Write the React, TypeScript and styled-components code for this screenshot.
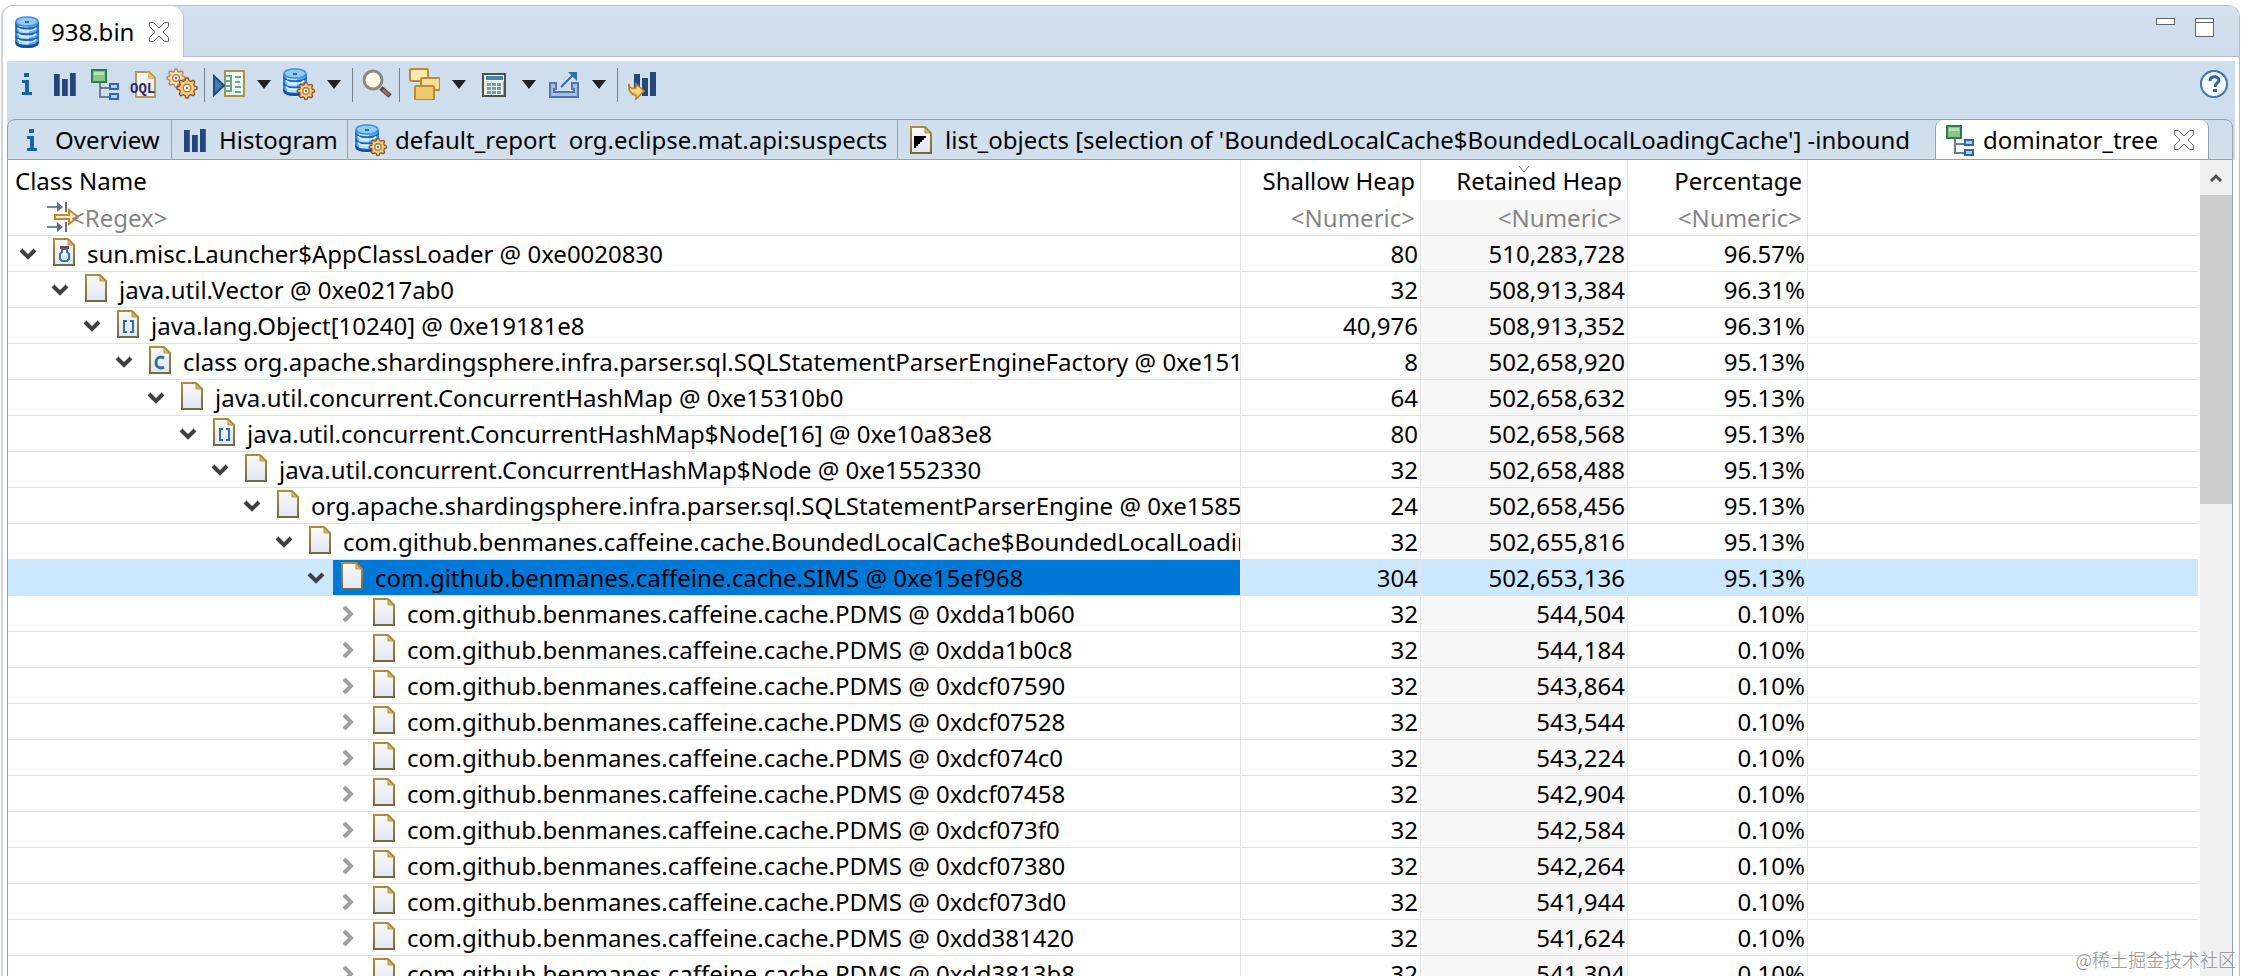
import React from "react";
import styled, { createGlobalStyle } from "styled-components";

const GlobalStyle = createGlobalStyle`
  *, *::before, *::after { box-sizing: border-box; }
  body {
    margin: 0;
    background: #ffffff;
    color: #000000;
    font: 24px/36px "Noto Sans", "Noto Sans CJK SC", sans-serif;
  }
  button, input { font: inherit; color: inherit; }
`;

/* ---------- frame ---------- */

const Page = styled.div`
  position: relative;
  display: flex;
  height: 100vh;
  padding: 5px 2px 0 1px;
  overflow: hidden;
`;

const Editor = styled.div`
  display: flex;
  flex: 1;
  flex-direction: column;
  min-width: 0;
  border: 1px solid #b4bfce;
  border-left: 2px solid #ccd3db;
  border-bottom: 0;
  border-radius: 12px 12px 0 0;
  overflow: hidden;
`;

const EditorStrip = styled.div`
  display: flex;
  align-items: flex-start;
  height: 51px;
  flex: none;
  background: linear-gradient(#d4e1ef, #cddceb);
  border-bottom: 1px solid #aebbd0;
`;

const EditorTab = styled.div`
  display: flex;
  align-items: center;
  gap: 8px;
  width: 181px;
  height: 51px;
  padding: 0 14px 0 8px;
  background: #ffffff;
  border-right: 1px solid #b4bfce;
  border-radius: 0 12px 0 0;
`;

const TabTitle = styled.button`
  display: flex;
  align-items: center;
  gap: 8px;
  flex: 1;
  min-width: 0;
  padding: 0;
  border: 0;
  background: none;
  text-align: left;
  white-space: pre;
`;

const PlainButton = styled.button`
  display: flex;
  flex: none;
  padding: 0;
  border: 0;
  background: none;
`;

const WindowButtons = styled.div`
  display: flex;
  gap: 20px;
  margin-left: auto;
  padding: 12px 25px 0 0;
`;

const EditorBody = styled.div`
  display: flex;
  flex: 1;
  flex-direction: column;
  min-height: 0;
  padding: 4px 4px 0;
`;

/* ---------- toolbar ---------- */

const Toolbar = styled.div`
  display: flex;
  align-items: flex-start;
  flex: none;
  height: 58px;
  padding: 7px 5px 0 3px;
  background: #cfdeec;
`;

const ToolButton = styled.button`
  width: 39px;
  height: 32px;
  flex: none;
  padding: 0;
  border: 0;
  background: none;
  text-align: left;
  svg { display: block; }
`;

const DropButton = styled(ToolButton)`
  display: flex;
  align-items: center;
  gap: 12px;
  width: 70px;
`;

const Separator = styled.span`
  width: 1px;
  height: 34px;
  flex: none;
  margin: 0 8px 0 -1px;
  background: #75818f;
`;

const Spacer = styled.span`
  flex: 1;
`;

/* ---------- inner tabs ---------- */

const StripBack = styled.div`
  flex: none;
  background: #cfdeec;
`;

const TabStrip = styled.div`
  display: grid;
  grid-template-columns: 164px 176px 550px 1037px 274px 1fr;
  height: 41px;
  margin-right: 2px;
  border: 1px solid #93a1b1;
  border-radius: 8px 8px 0 0;
  background: linear-gradient(#cfdeec, #d2e0ee);
  overflow: hidden;
`;

const InnerTab = styled.div<{ $active?: boolean; $divided?: boolean }>`
  display: flex;
  align-items: center;
  min-width: 0;
  height: ${(p) => (p.$active ? 40 : 39)}px;
  padding: 0 14px 0 7px;
  background: ${(p) => (p.$active ? "#ffffff" : "transparent")};
  border: 0 solid #93a1b1;
  border-width: 0 ${(p) => (p.$active || p.$divided ? 1 : 0)}px 0 ${(p) => (p.$active ? 1 : 0)}px;
  border-radius: ${(p) => (p.$active ? "8px 8px 0 0" : "0")};
`;

const InnerTitle = styled(TabTitle)`
  flex: 1 0 auto;
`;

/* ---------- table ---------- */

const Content = styled.div`
  display: flex;
  flex: 1;
  min-height: 0;
  margin-right: 2px;
  border: 1px solid #93a1b1;
  border-width: 0 1px;
  overflow: hidden;
`;

const TableArea = styled.div`
  flex: 1;
  min-width: 0;
  margin-right: 2px;
  overflow: hidden;
`;

const Table = styled.table`
  width: 100%;
  table-layout: fixed;
  border-collapse: separate;
  border-spacing: 0;
`;

const Col = styled.col<{ $w?: number }>`
  width: ${(p) => (p.$w ? `${p.$w}px` : "auto")};
`;

const HeadCell = styled.th<{ $left?: boolean }>`
  position: relative;
  height: 40px;
  padding: ${(p) => (p.$left ? "2px 0 0 7px" : "2px 5px 0 0")};
  border-right: 1px solid #e6e6e6;
  font-weight: 400;
  text-align: ${(p) => (p.$left ? "left" : "right")};
  white-space: nowrap;
  &:last-child { border-right: 0; }
`;

const SortMark = styled.svg`
  position: absolute;
  top: 5px;
  left: 50%;
  margin-left: -6px;
`;

const FilterCell = styled.td<{ $sorted?: boolean }>`
  height: 36px;
  padding: 0 5px 0 0;
  background: ${(p) => (p.$sorted ? "#f7f7f7" : "#ffffff")};
  border-right: 1px solid #e6e6e6;
  border-bottom: 1px solid #e0e0e0;
  &:last-child { border-right: 0; }
`;

const FilterBox = styled.div`
  display: flex;
  padding-left: 39px;
  svg { flex: none; }
`;

const FilterInput = styled.input<{ $right?: boolean }>`
  display: block;
  width: 100%;
  height: 35px;
  margin-left: ${(p) => (p.$right ? 0 : -8)}px;
  padding: 0;
  border: 0;
  outline: 0;
  background: transparent;
  text-align: ${(p) => (p.$right ? "right" : "left")};
  &::placeholder { color: #868686; opacity: 1; }
`;

const Row = styled.tr<{ $selected?: boolean }>`
  background: ${(p) => (p.$selected ? "#cce8ff" : "transparent")};
`;

const Cell = styled.td<{ $sorted?: boolean }>`
  height: 36px;
  padding: 0 2px 0 0;
  background: ${(p) => (p.$sorted ? "#f7f7f7" : "transparent")};
  border-right: 1px solid #e6e6e6;
  border-bottom: 1px solid #e0e0e0;
  line-height: 35px;
  text-align: right;
  &:last-child { border-right: 0; }
`;

const TreeCell = styled(Cell)`
  padding: 0;
  text-align: left;
`;

const TreeLine = styled.div<{ $depth: number }>`
  display: flex;
  height: 35px;
  padding-left: ${(p) => 10 + p.$depth * 32}px;
  overflow: hidden;
`;

const Toggle = styled.button`
  display: flex;
  align-items: center;
  justify-content: center;
  width: 20px;
  flex: none;
  margin-right: 7px;
  padding: 0;
  border: 0;
  background: none;
`;

const Label = styled.div<{ $selected?: boolean }>`
  display: flex;
  flex: 1;
  gap: 7px;
  min-width: 0;
  padding-left: 3px;
  background: ${(p) => (p.$selected ? "#0078d7" : "transparent")};
  white-space: nowrap;
  overflow: hidden;
  svg { flex: none; }
`;

/* ---------- scroll bar ---------- */

const ScrollBar = styled.div`
  display: flex;
  flex-direction: column;
  width: 32px;
  flex: none;
  background: #f0f0f0;
`;

const ScrollUp = styled.button`
  display: flex;
  align-items: center;
  justify-content: center;
  height: 35px;
  flex: none;
  padding: 0;
  border: 0;
  background: #f0f0f0;
`;

const Thumb = styled.div`
  height: 309px;
  background: #cdcdcd;
`;

const Watermark = styled.div`
  position: absolute;
  right: 6px;
  bottom: 5px;
  color: #8f8f8f;
  font: 300 18px/24px "Noto Sans CJK SC", sans-serif;
`;

/* ---------- icons ---------- */

const Svg = ({ children, w = 32, h = 32 }: { children: React.ReactNode; w?: number; h?: number }) => (
  <svg width={w} height={h} viewBox={`0 0 ${w} ${h}`} fill="none" aria-hidden="true">
    {children}
  </svg>
);

const gearPath = (cx: number, cy: number, r: number) => {
  const pts: string[] = [];
  for (let i = 0; i < 32; i++) {
    const a = ((i - 0.5) / 32) * Math.PI * 2;
    const rad = i % 4 < 2 ? r : r * 0.76;
    pts.push(`${(cx + Math.cos(a) * rad).toFixed(1)} ${(cy + Math.sin(a) * rad).toFixed(1)}`);
  }
  return `M${pts.join("L")}Z`;
};

const Gear = ({ cx, cy, r, pale }: { cx: number; cy: number; r: number; pale?: boolean }) => (
  <>
    <path
      d={gearPath(cx, cy, r)}
      fill={pale ? "#f8e2b0" : "#f7cf7c"}
      stroke={pale ? "#b08468" : "#8c5236"}
      strokeWidth="1.4"
      strokeLinejoin="round"
    />
    <circle cx={cx} cy={cy} r={r * 0.38} fill="#f4f1e6" stroke="#b57a35" strokeWidth="1.4" />
    <circle cx={cx} cy={cy} r="1.2" fill="#4a6fa5" />
  </>
);

const Cylinder = ({ w, h, layers }: { w: number; h: number; layers: number }) => {
  const step = (h - 9) / layers;
  return (
    <>
      <path
        d={`M1 5V${h - 5}C1 ${h - 2} 6 ${h} ${w / 2} ${h}S${w - 1} ${h - 2} ${w - 1} ${h - 5}V5Z`}
        fill="#64acee"
      />
      <rect x="4" y="6" width={w / 2 - 2} height={h - 9} fill="#b9e3fb" />
      <path d={`M1 6V${h - 5}M${w - 1} 6V${h - 5}`} stroke="#2f7fd2" strokeWidth="2" />
      {Array.from({ length: layers }, (_, i) => {
        const y = 5 + step * (i + 1);
        return (
          <g key={i}>
            <path d={`M1 ${y - 2}C2 ${y + 3} ${w - 2} ${y + 3} ${w - 1} ${y - 2}`} stroke="#1d5fc0" strokeWidth="1.8" />
            <path d={`M3 ${y + 1}C5 ${y + 5} ${w - 5} ${y + 5} ${w - 3} ${y + 1}`} stroke="#d2f0ff" strokeWidth="1.6" />
          </g>
        );
      })}
      <path d={`M1 ${h - 6}C1 ${h - 2} 6 ${h - 1} ${w / 2} ${h - 1}S${w - 1} ${h - 2} ${w - 1} ${h - 6}`} stroke="#1747a4" strokeWidth="2" />
      <ellipse cx={w / 2} cy="5.5" rx={w / 2 - 1} ry="4.5" fill="#8fcaf0" stroke="#4293da" strokeWidth="1.6" />
      <path d={`M${w / 2 - 2} 6h4`} stroke="#2b6cae" strokeWidth="2" />
    </>
  );
};

const DatabaseIcon = () => (
  <Svg>
    <g transform="translate(4 0)">
      <Cylinder w={24} h={32} layers={4} />
    </g>
  </Svg>
);

const DatabaseGearIcon = () => (
  <Svg>
    <Cylinder w={24} h={28} layers={3} />
    <Gear cx={23} cy={23} r={8.6} />
  </Svg>
);

const InfoIcon = () => (
  <Svg>
    <path d="M14 5h5v4h-5zM12 12h7v12h3v3H12v-3h3v-9h-3z" fill="#1565a5" />
  </Svg>
);

const HistogramIcon = () => (
  <Svg>
    <path d="M5 6h6v22H5zM13 11h6v17h-6zM21 5h6v23h-6z" fill="#26457b" />
    <path d="M10 6h1v22h-1zM18 11h1v17h-1zM26 5h1v23h-1z" fill="#4a6796" />
  </Svg>
);

const TreeIcon = () => (
  <Svg>
    <g shapeRendering="crispEdges">
      <path d="M12 15v14h9M12 20h9" stroke="#6f7f92" strokeWidth="2" />
      <rect x="4" y="2" width="14" height="12" fill="#8cc48a" stroke="#2c7d4f" strokeWidth="2" />
      <path d="M6 4h10v3H6z" fill="#b9deb2" />
      <rect x="22" y="16" width="8" height="5" fill="#a9d4f5" stroke="#2f62b0" strokeWidth="2" />
      <rect x="22" y="26" width="8" height="5" fill="#a9d4f5" stroke="#2f62b0" strokeWidth="2" />
    </g>
  </Svg>
);

const Sheet = ({ children }: { children?: React.ReactNode }) => (
  <Svg>
    <defs>
      <linearGradient id="sheetEdge" x1="0" y1="0" x2="0" y2="1">
        <stop offset="0" stopColor="#b08d3e" />
        <stop offset="1" stopColor="#746c3e" />
      </linearGradient>
      <linearGradient id="sheetFill" x1="0" y1="0" x2="0" y2="1">
        <stop offset="0" stopColor="#fbfbfd" />
        <stop offset="1" stopColor="#e0e6f4" />
      </linearGradient>
    </defs>
    <path d="M6 3h14l6 6v20H6z" fill="url(#sheetFill)" stroke="url(#sheetEdge)" strokeWidth="2" />
    <path d="M20 4v5h5z" fill="#dcbb6d" stroke="#b8934a" strokeWidth="1" />
    {children}
  </Svg>
);

const FileIcon = () => <Sheet />;

const ArrayIcon = () => (
  <Sheet>
    <path d="M15 13h-3v11h3M18 13h3v11h-3" stroke="#2f6fa8" strokeWidth="2" />
  </Sheet>
);

const ClassIcon = () => (
  <Sheet>
    <path d="M20 14c-3-2-8-1-8 4.500s5 6.500 8 4.500" stroke="#2f6fa8" strokeWidth="2.800" />
  </Sheet>
);

const LoaderIcon = () => (
  <Sheet>
    <rect x="12" y="10" width="9" height="3" fill="#8a3f22" />
    <path d="M14 13v3l-2 2v5l2 2h5l2-2v-5l-2-2v-3z" fill="#f4fafd" stroke="#2f74b0" strokeWidth="2" />
    <path d="M14 20h5v3h-5z" fill="#cfe6f6" />
  </Sheet>
);

const ListObjectsIcon = () => (
  <Sheet>
    <path d="M9 12h12v2h-2v2h-2v2h-2v2h-2v2h-2v2H9z" fill="#000" />
  </Sheet>
);

const OqlIcon = () => (
  <Svg>
    <path d="M9 4h13l6 6v19H9z" fill="#f1f3f8" stroke="#b39a5e" strokeWidth="2" />
    <path d="M21 4v7h7z" fill="#e8c06a" />
    <text x="3" y="25" fill="#2b2a6e" fontFamily="Liberation Mono, monospace" fontWeight="700" fontSize="14">
      OQL
    </text>
  </Svg>
);

const GearsIcon = () => (
  <Svg>
    <Gear cx={10} cy={10} r={9} pale />
    <Gear cx={21} cy={20} r={10} />
  </Svg>
);

const RunReportIcon = () => (
  <Svg>
    <rect x="12" y="3" width="19" height="25" fill="#f3faf3" stroke="#a8914a" strokeWidth="2" />
    <path d="M11 8h7M11 13h7M11 18h7M11 23h7M18 7v17M22 9h6M22 14h5M22 19h6M22 24h6" stroke="#62aa8a" strokeWidth="2" />
    <path d="M1 8l10 9.500L1 27z" fill="#3d7fae" stroke="#1c4f80" strokeWidth="2" />
  </Svg>
);

const SearchIcon = () => (
  <Svg>
    <path d="M20 20l9 8" stroke="#5d4a48" strokeWidth="5" />
    <path d="M22 22l6 5" stroke="#b9765a" strokeWidth="2" />
    <circle cx="12" cy="12" r="9" fill="#fdf8dd" stroke="#8a8a84" strokeWidth="3" />
    <path d="M7 11c0-3 2-4 5-4" stroke="#ffffff" strokeWidth="2" />
  </Svg>
);

const GroupIcon = () => (
  <Svg>
    <g stroke="#bd8b35" strokeWidth="2" strokeLinejoin="round">
      <path d="M2 3q0-2 2-2h15q1 0 1 2v9q0 1-1 1H4q-2 0-2-2z" fill="#fae8b2" />
      <path d="M13 11q0-1 1-1h17q1 0 1 1v9q0 2-2 2H15q-2 0-2-2z" fill="#f6dd98" />
      <path d="M7 19q0-1 1-1h17q1 0 1 1v11q0 2-1 2H9q-2 0-2-2z" fill="#efc96d" />
    </g>
  </Svg>
);

const CalculatorIcon = () => (
  <Svg>
    <g shapeRendering="crispEdges">
      <rect x="5" y="6" width="22" height="22" fill="#f3f1df" stroke="#4c4f4b" strokeWidth="2" />
      <rect x="8" y="8" width="17" height="4" fill="#3f87b5" />
      {[15, 19, 23].map((y) =>
        [9, 14, 19].map((x) => <rect key={`${x}-${y}`} x={x} y={y} width="4" height="3" fill="#6a9fc0" />)
      )}
      <path d="M25 13v14" stroke="#b5a76c" strokeWidth="1" />
    </g>
  </Svg>
);

const ExportIcon = () => (
  <Svg>
    <path d="M2 15h6v6h-2v3h20v-3h-2v-6h6v14H2z" fill="#a9bfe2" stroke="#5373ae" strokeWidth="2" />
    <path d="M13 19L26 6" stroke="#2d6f9f" strokeWidth="2" />
    <path d="M20 4h9v9z" fill="#2d6f9f" />
  </Svg>
);

const CompareIcon = () => (
  <Svg>
    <path d="M8 6h6v14H8zM16 10h6v18h-6zM24 4h6v24h-6z" fill="#26457b" />
    <path d="M3 16c0 4 3 5 7 4v-4l8 7-8 8v-4C5 27 2 22 3 16z" fill="#f8d77f" stroke="#b9822a" strokeWidth="1.600" />
  </Svg>
);

const HelpIcon = () => (
  <Svg>
    <circle cx="16" cy="16" r="13" fill="#f7fbfe" stroke="#3b78b4" strokeWidth="2" />
    <path d="M12 13c0-6 9-5 9-1 0 3-4 3-4 7" stroke="#2a67a8" strokeWidth="3" />
    <path d="M15 21h4v3h-4z" fill="#2a67a8" />
  </Svg>
);

const FilterIcon = () => (
  <Svg>
    <path d="M0 7h11M0 27h11" stroke="#5b8db3" strokeWidth="2" />
    <path d="M10 2l6 5-6 5zM10 22l6 5-6 5z" fill="#66707c" />
    <path d="M19 2v10M19 22v10" stroke="#66707c" strokeWidth="2" />
    <path d="M8 15h14v-5l9 7-9 7v-5H8z" fill="#fdf3cf" stroke="#c08a2c" strokeWidth="2" />
  </Svg>
);

const CloseIcon = () => (
  <Svg w={20} h={20}>
    <path
      d="M0.500 0.500h4l5.500 5.500 5.500-5.500h4v4L14 10l5.500 5.500v4h-4L10 14l-5.500 5.500h-4v-4L6 10 0.500 4.500z"
      fill="#ffffff"
      stroke="#6a6a6a"
      strokeWidth="1"
    />
  </Svg>
);

const DropArrow = () => (
  <Svg w={14} h={9}>
    <path d="M0 0h14L7 9z" fill="#1f2328" />
  </Svg>
);

const MinimizeIcon = () => (
  <Svg w={19} h={20}>
    <rect x="0.5" y="0.5" width="18" height="6" fill="#fff" stroke="#5f6670" />
  </Svg>
);

const MaximizeIcon = () => (
  <Svg w={19} h={20}>
    <path d="M0.5 0.500h18v18h-18zM0.500 4.500h18" fill="#fff" stroke="#5f6670" />
  </Svg>
);

const Chevron = ({ open }: { open: boolean }) =>
  open ? (
    <Svg w={18} h={12}>
      <path d="M2 2l7 7 7-7" stroke="#404040" strokeWidth="4" />
    </Svg>
  ) : (
    <Svg w={12} h={18}>
      <path d="M2 2l7 7-7 7" stroke="#a0a0a0" strokeWidth="4" />
    </Svg>
  );

/* ---------- data ---------- */

type Item = { name: string; icon?: React.FC; shallow: string; retained: string; pct: string; selected?: boolean };

const path: Item[] = [
  { name: "sun.misc.Launcher$AppClassLoader @ 0xe0020830", icon: LoaderIcon, shallow: "80", retained: "510,283,728", pct: "96.57%" },
  { name: "java.util.Vector @ 0xe0217ab0", shallow: "32", retained: "508,913,384", pct: "96.31%" },
  { name: "java.lang.Object[10240] @ 0xe19181e8", icon: ArrayIcon, shallow: "40,976", retained: "508,913,352", pct: "96.31%" },
  { name: "class org.apache.shardingsphere.infra.parser.sql.SQLStatementParserEngineFactory @ 0xe1517e48", icon: ClassIcon, shallow: "8", retained: "502,658,920", pct: "95.13%" },
  { name: "java.util.concurrent.ConcurrentHashMap @ 0xe15310b0", shallow: "64", retained: "502,658,632", pct: "95.13%" },
  { name: "java.util.concurrent.ConcurrentHashMap$Node[16] @ 0xe10a83e8", icon: ArrayIcon, shallow: "80", retained: "502,658,568", pct: "95.13%" },
  { name: "java.util.concurrent.ConcurrentHashMap$Node @ 0xe1552330", shallow: "32", retained: "502,658,488", pct: "95.13%" },
  { name: "org.apache.shardingsphere.infra.parser.sql.SQLStatementParserEngine @ 0xe1585c10", shallow: "24", retained: "502,658,456", pct: "95.13%" },
  { name: "com.github.benmanes.caffeine.cache.BoundedLocalCache$BoundedLocalLoadingCache", shallow: "32", retained: "502,655,816", pct: "95.13%" },
  { name: "com.github.benmanes.caffeine.cache.SIMS @ 0xe15ef968", shallow: "304", retained: "502,653,136", pct: "95.13%", selected: true },
];

const leaves: [string, string][] = [
  ["0xdda1b060", "544,504"],
  ["0xdda1b0c8", "544,184"],
  ["0xdcf07590", "543,864"],
  ["0xdcf07528", "543,544"],
  ["0xdcf074c0", "543,224"],
  ["0xdcf07458", "542,904"],
  ["0xdcf073f0", "542,584"],
  ["0xdcf07380", "542,264"],
  ["0xdcf073d0", "541,944"],
  ["0xdd381420", "541,624"],
  ["0xdd3813b8", "541,304"],
];

const rows = [
  ...path.map((item, depth) => ({ ...item, depth, open: true })),
  ...leaves.map(([address, retained]) => ({
    name: `com.github.benmanes.caffeine.cache.PDMS @ ${address}`,
    icon: undefined,
    shallow: "32",
    retained,
    pct: "0.10%",
    selected: false,
    depth: path.length,
    open: false,
  })),
];

const tabs: { title: string; icon: React.FC; active?: boolean; divided?: boolean }[] = [
  { title: "Overview", icon: InfoIcon, divided: true },
  { title: "Histogram", icon: HistogramIcon, divided: true },
  { title: "default_report  org.eclipse.mat.api:suspects", icon: DatabaseGearIcon, divided: true },
  { title: "list_objects [selection of 'BoundedLocalCache$BoundedLocalLoadingCache'] -inbound", icon: ListObjectsIcon },
  { title: "dominator_tree", icon: TreeIcon, active: true },
];

const Tool = ({ icon: Icon, label, drop }: { icon: React.FC; label: string; drop?: boolean }) =>
  drop ? (
    <DropButton aria-label={label} aria-haspopup="menu">
      <Icon />
      <DropArrow />
    </DropButton>
  ) : (
    <ToolButton aria-label={label}>
      <Icon />
    </ToolButton>
  );

export default function App() {
  return (
    <Page>
      <GlobalStyle />
      <Editor>
        <EditorStrip>
          <EditorTab>
            <TabTitle>
              <DatabaseIcon />
              938.bin
            </TabTitle>
            <PlainButton aria-label="Close 938.bin">
              <CloseIcon />
            </PlainButton>
          </EditorTab>
          <WindowButtons>
            <PlainButton aria-label="Minimize">
              <MinimizeIcon />
            </PlainButton>
            <PlainButton aria-label="Maximize">
              <MaximizeIcon />
            </PlainButton>
          </WindowButtons>
        </EditorStrip>
        <EditorBody>
          <Toolbar role="toolbar">
            <Tool icon={InfoIcon} label="Overview" />
            <Tool icon={HistogramIcon} label="Histogram" />
            <Tool icon={TreeIcon} label="Dominator tree" />
            <Tool icon={OqlIcon} label="OQL" />
            <Tool icon={GearsIcon} label="Thread overview" />
            <Separator />
            <Tool icon={RunReportIcon} label="Run report" drop />
            <Tool icon={DatabaseGearIcon} label="Query browser" drop />
            <Separator />
            <Tool icon={SearchIcon} label="Find object" />
            <Separator />
            <Tool icon={GroupIcon} label="Group result" drop />
            <Tool icon={CalculatorIcon} label="Calculate retained size" drop />
            <Tool icon={ExportIcon} label="Export" drop />
            <Separator />
            <Tool icon={CompareIcon} label="Compare" />
            <Spacer />
            <PlainButton aria-label="Help">
              <HelpIcon />
            </PlainButton>
          </Toolbar>
          <StripBack>
            <TabStrip role="tablist">
              {tabs.map(({ title, icon: Icon, active, divided }) => (
                <InnerTab key={title} $active={active} $divided={divided}>
                  <InnerTitle role="tab" aria-selected={!!active}>
                    <Icon />
                    {title}
                  </InnerTitle>
                  {active && (
                    <PlainButton aria-label={`Close ${title}`}>
                      <CloseIcon />
                    </PlainButton>
                  )}
                </InnerTab>
              ))}
            </TabStrip>
          </StripBack>
          <Content>
            <TableArea>
              <Table>
                <colgroup>
                  <Col $w={1233} />
                  <Col $w={180} />
                  <Col $w={207} />
                  <Col $w={180} />
                  <Col />
                </colgroup>
                <thead>
                  <tr>
                    <HeadCell $left>Class Name</HeadCell>
                    <HeadCell>Shallow Heap</HeadCell>
                    <HeadCell>
                      <SortMark width="12" height="8" viewBox="0 0 12 8" fill="none" aria-hidden="true">
                        <path d="M1 1l5 6 5-6" stroke="#6a6a6a" />
                      </SortMark>
                      Retained Heap
                    </HeadCell>
                    <HeadCell>Percentage</HeadCell>
                    <HeadCell />
                  </tr>
                </thead>
                <tbody>
                  <tr>
                    <FilterCell>
                      <FilterBox>
                        <FilterIcon />
                        <FilterInput aria-label="Class name filter" placeholder="<Regex>" />
                      </FilterBox>
                    </FilterCell>
                    <FilterCell>
                      <FilterInput $right aria-label="Shallow heap filter" placeholder="<Numeric>" />
                    </FilterCell>
                    <FilterCell $sorted>
                      <FilterInput $right aria-label="Retained heap filter" placeholder="<Numeric>" />
                    </FilterCell>
                    <FilterCell>
                      <FilterInput $right aria-label="Percentage filter" placeholder="<Numeric>" />
                    </FilterCell>
                    <FilterCell />
                  </tr>
                  {rows.map(({ name, icon: Icon = FileIcon, shallow, retained, pct, selected, depth, open }) => (
                    <Row key={name} $selected={selected}>
                      <TreeCell>
                        <TreeLine $depth={depth}>
                          <Toggle aria-label={open ? "Collapse" : "Expand"} aria-expanded={open}>
                            <Chevron open={open} />
                          </Toggle>
                          <Label $selected={selected}>
                            <Icon />
                            {name}
                          </Label>
                        </TreeLine>
                      </TreeCell>
                      <Cell>{shallow}</Cell>
                      <Cell $sorted={!selected}>{retained}</Cell>
                      <Cell>{pct}</Cell>
                      <Cell />
                    </Row>
                  ))}
                </tbody>
              </Table>
            </TableArea>
            <ScrollBar>
              <ScrollUp aria-label="Scroll up">
                <Svg w={12} h={9}>
                  <path d="M1 8l5-5 5 5" stroke="#505050" strokeWidth="3" />
                </Svg>
              </ScrollUp>
              <Thumb />
            </ScrollBar>
          </Content>
        </EditorBody>
      </Editor>
      <Watermark>@稀土掘金技术社区</Watermark>
    </Page>
  );
}
